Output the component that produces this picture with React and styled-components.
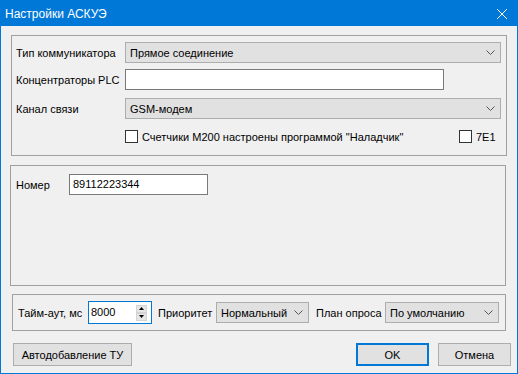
import React from 'react';
import styled, { createGlobalStyle } from 'styled-components';

const GlobalStyle = createGlobalStyle`
  html, body {
    margin: 0;
    padding: 0;
    background: #f0f0f0;
  }
  body {
    font-family: "Liberation Sans", Arial, sans-serif;
    font-size: 11px;
    color: #000;
  }
  * {
    box-sizing: border-box;
  }
`;

const Window = styled.div`
  width: 518px;
  height: 374px;
  border: 1px solid #0078d7;
  background: #f0f0f0;
  display: flex;
  flex-direction: column;
`;

const TitleBar = styled.div`
  height: 25px;
  flex: none;
  background: #0078d7;
  color: #fff;
  display: flex;
  align-items: center;
  justify-content: space-between;
  padding: 0 10px 0 4px;
`;

const Title = styled.span`
  font-size: 12px;
  line-height: 1;
`;

const Body = styled.div`
  display: flex;
  flex-direction: column;
  padding-top: 9px;
`;

const Panel = styled.div`
  width: ${p => p.$w}px;
  height: ${p => p.$h}px;
  margin-left: ${p => p.$ml}px;
  margin-top: ${p => p.$mt || 0}px;
  border: 1px solid #a0a0a0;
  padding: ${p => p.$pad};
  display: flex;
  flex-direction: ${p => p.$row ? 'row' : 'column'};
  align-items: ${p => p.$row ? 'center' : 'stretch'};
`;

const Row = styled.div`
  display: flex;
  align-items: center;
  height: ${p => p.$h || 21}px;
  margin-top: ${p => p.$mt || 0}px;
  margin-left: ${p => p.$ml || 0}px;
`;

const Label = styled.span`
  flex: none;
  width: ${p => p.$w}px;
  margin-left: ${p => p.$ml || 0}px;
  white-space: nowrap;
`;

const Combo = styled.div`
  flex: none;
  width: ${p => p.$w}px;
  height: 21px;
  background: #e1e1e1;
  border: 1px solid #adadad;
  display: flex;
  align-items: center;
  justify-content: space-between;
  padding: 0 5px 0 4px;
  white-space: nowrap;
`;

const TextBox = styled.div`
  flex: none;
  width: ${p => p.$w}px;
  height: 21px;
  background: #fff;
  border: 1px solid #7a7a7a;
  padding: 0 0 2px 3px;
  display: flex;
  align-items: center;
`;

const CheckItem = styled.div`
  flex: none;
  width: ${p => p.$w || 'auto'};
  display: flex;
  align-items: center;
  white-space: nowrap;
`;

const Box = styled.span`
  width: 13px;
  height: 13px;
  border: 1px solid #333;
  background: #fff;
  margin-right: 4px;
  flex: none;
`;

const Spinner = styled.div`
  flex: none;
  width: 64px;
  height: 23px;
  background: #fff;
  border: 1px solid #0078d7;
  display: flex;
  align-items: center;
  justify-content: space-between;
  padding: 0 4px 2px 2px;
`;

const SpinButtons = styled.div`
  display: flex;
  flex-direction: column;
  margin-top: 2px;
`;

const SpinButton = styled.span`
  width: 11px;
  height: 8px;
  background: #e6e6e6;
  border: 1px solid #d4d4d4;
  display: flex;
  align-items: center;
  justify-content: center;
`;

const ButtonBar = styled.div`
  display: flex;
  align-items: center;
  margin-top: 12px;
  padding: 0 6px 0 12px;
`;

const Button = styled.div`
  flex: none;
  width: ${p => p.$w}px;
  height: 23px;
  margin-left: ${p => p.$ml || 0}px;
  background: #e1e1e1;
  border: ${p => p.$default ? '2px solid #0078d7' : '1px solid #adadad'};
  display: flex;
  align-items: center;
  justify-content: center;
  white-space: nowrap;
`;

const Spacer = styled.div`
  flex: 1;
`;

const Chevron = () => (
  <svg width="9" height="5" viewBox="0 0 9 5">
    <path d="M0.5 0.5 L4.5 4.5 L8.5 0.5" fill="none" stroke="#555" strokeWidth="1" />
  </svg>
);

const CloseIcon = () => (
  <svg width="10" height="10" viewBox="0 0 10 10">
    <path d="M0 0 L10 10 M10 0 L0 10" stroke="#fff" strokeWidth="1" />
  </svg>
);

const Arrow = ({ up }) => (
  <svg width="5" height="3" viewBox="0 0 5 3">
    <path d={up ? 'M2.5 0 L5 3 L0 3 Z' : 'M0 0 L5 0 L2.5 3 Z'} fill="#000" />
  </svg>
);

const Select = ({ w, children }) => (
  <Combo $w={w}>
    <span>{children}</span>
    <Chevron />
  </Combo>
);

export default function App() {
  return (
    <>
      <GlobalStyle />
      <Window>
        <TitleBar>
          <Title>Настройки АСКУЭ</Title>
          <CloseIcon />
        </TitleBar>
        <Body>
          <Panel $w={496} $h={121} $ml={10} $pad="6px 5px 0 4px">
            <Row>
              <Label $w={109}>Тип коммуникатора</Label>
              <Select w={376}>Прямое соединение</Select>
            </Row>
            <Row $mt={6}>
              <Label $w={109}>Концентраторы PLC</Label>
              <TextBox $w={319} />
            </Row>
            <Row $mt={8}>
              <Label $w={109}>Канал связи</Label>
              <Select w={376}>GSM-модем</Select>
            </Row>
            <Row $mt={11} $h={13} $ml={109}>
              <CheckItem $w="334px">
                <Box />
                Счетчики М200 настроены программой "Наладчик"
              </CheckItem>
              <CheckItem>
                <Box />
                7E1
              </CheckItem>
            </Row>
          </Panel>

          <Panel $w={496} $h={121} $ml={9} $mt={9} $pad="8px 0 0 5px">
            <Row>
              <Label $w={53}>Номер</Label>
              <TextBox $w={139}>89112223344</TextBox>
            </Row>
          </Panel>

          <Panel $w={494} $h={37} $ml={11} $mt={8} $pad="0 0 0 5px" $row>
            <Label $w={70}>Тайм-аут, мс</Label>
            <Spinner>
              <span>8000</span>
              <SpinButtons>
                <SpinButton><Arrow up /></SpinButton>
                <SpinButton><Arrow /></SpinButton>
              </SpinButtons>
            </Spinner>
            <Label $w={58} $ml={6}>Приоритет</Label>
            <Select w={93}>Нормальный</Select>
            <Label $w={69} $ml={7}>План опроса</Label>
            <Select w={114}>По умолчанию</Select>
          </Panel>

          <ButtonBar>
            <Button $w={119}>Автодобавление ТУ</Button>
            <Spacer />
            <Button $w={73} $default>OK</Button>
            <Button $w={73} $ml={9}>Отмена</Button>
          </ButtonBar>
        </Body>
      </Window>
    </>
  );
}
